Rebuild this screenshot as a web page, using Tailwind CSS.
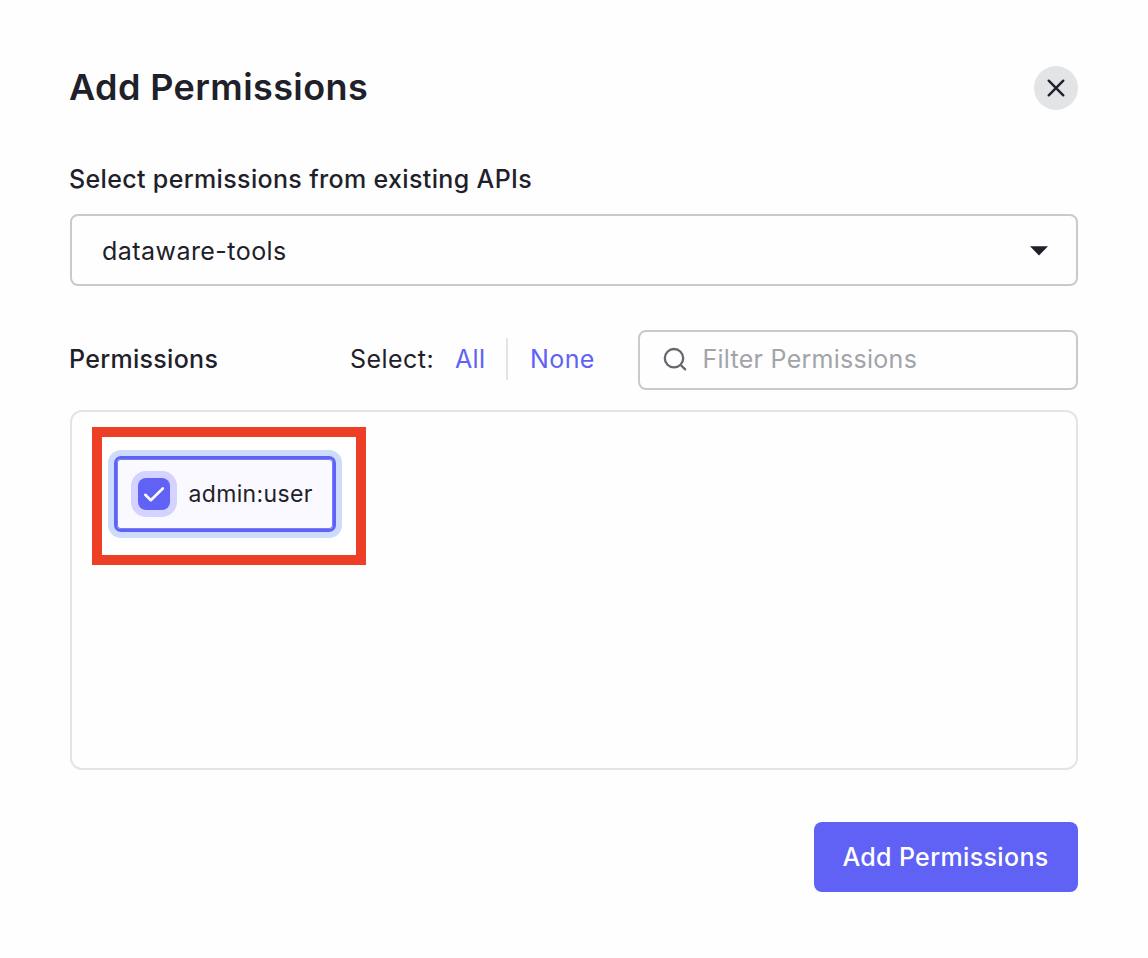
<!DOCTYPE html>
<html lang="en">
<head>
<meta charset="utf-8">
<title>Add Permissions</title>
<script src="https://cdn.jsdelivr.net/npm/@tailwindcss/browser@4"></script>
</head>
<body class="h-[958px] overflow-hidden bg-[#fefefe] font-['Inter',sans-serif] text-[#1e212a]">
<main class="flex flex-col px-[70px] pt-[66px]">
  <header class="flex h-11 items-center justify-between">
    <h1 class="-ml-px pb-0.5 text-[36px] leading-[42px] font-semibold tracking-[0.4px] whitespace-nowrap">Add Permissions</h1>
    <button class="flex size-11 items-center justify-center rounded-full bg-[#e3e4e6]" aria-label="Close">
      <svg class="size-11" viewBox="0 0 44 44" fill="none" stroke="#1e212a" stroke-width="2.4" stroke-linecap="round"><path d="M14.7 14.7 29.3 29.3M29.3 14.7 14.7 29.3"/></svg>
    </button>
  </header>

  <label class="mt-[51px] -ml-px h-9 text-[25px] leading-9 font-medium tracking-[0.35px] whitespace-nowrap">Select permissions from existing APIs</label>
  <div class="mt-[17px] flex h-[72px] items-center justify-between rounded-lg border-2 border-[#c9cace] pt-0.5 pr-[27px] pl-[30px]">
    <span class="text-[25px] leading-9 tracking-[0.45px]">dataware-tools</span>
    <svg class="h-[10px] w-[20px]" viewBox="0 0 20 10" fill="#1e212a"><path d="M1 .2h18L10 9.4z"/></svg>
  </div>

  <div class="mt-11 flex h-[60px] items-center">
    <div class="flex h-[60px] items-center pb-0.5">
      <span class="-ml-px w-[281px] text-[25px] leading-9 font-medium tracking-[0.3px]">Permissions</span>
      <span class="w-[105px] text-[25px] leading-9 tracking-[0.45px]">Select:</span>
      <a class="w-[51px] text-[25px] leading-9 tracking-[0.3px] text-[#6062f6]">All</a>
      <span class="h-[42px] w-0.5 bg-[#e3e4e6]"></span>
      <a class="ml-[22px] w-[108px] text-[25px] leading-9 tracking-[0.4px] text-[#6062f6]">None</a>
    </div>
    <div class="flex h-[60px] w-[440px] items-center rounded-lg border-2 border-[#c9cace] pb-0.5 pl-[23px]">
      <svg class="size-[26px]" viewBox="0 0 26 26" fill="none" stroke="#65676e" stroke-width="2.3" stroke-linecap="round"><circle cx="11" cy="12.200" r="9.2"/><path d="m17.600 19 4.600 4.400"/></svg>
      <span class="ml-[13.5px] text-[25px] leading-9 tracking-[0.27px] text-[#a3a4aa]">Filter Permissions</span>
    </div>
  </div>

  <section class="mt-5 h-[360px] rounded-xl border-2 border-[#e3e4e6] pt-[15px] pl-5">
    <div class="h-[138px] w-[274px] border-10 border-[#ed3f25] bg-white pt-[19px] pl-3">
      <div class="flex h-[76px] w-[222px] items-center rounded-[7px] border-3 border-[#6062f6] bg-[#faf9ff] pl-[21px] shadow-[0_0_0_6px_#ccdcfa,inset_0_0_0_1px_#7b7df8]">
        <span class="flex size-8 items-center justify-center rounded-lg bg-[#6062f6] shadow-[0_0_0_7px_#d4d2ff]">
          <svg class="size-8" viewBox="0 0 32 32" fill="none" stroke="#fff" stroke-width="2.6" stroke-linecap="round" stroke-linejoin="round"><path d="m7.300 16.800 5.500 5.400L24.800 10.500"/></svg>
        </span>
        <span class="ml-[18.5px] text-[23px] leading-8 tracking-[0.35px]">admin:user</span>
      </div>
    </div>
  </section>

  <footer class="mt-[52px] flex justify-end">
    <button class="h-[70px] w-[264px] rounded-lg bg-[#6062f6] pr-px text-[25px] leading-9 font-medium tracking-[0.35px] whitespace-nowrap text-white">Add Permissions</button>
  </footer>
</main>
</body>
</html>
